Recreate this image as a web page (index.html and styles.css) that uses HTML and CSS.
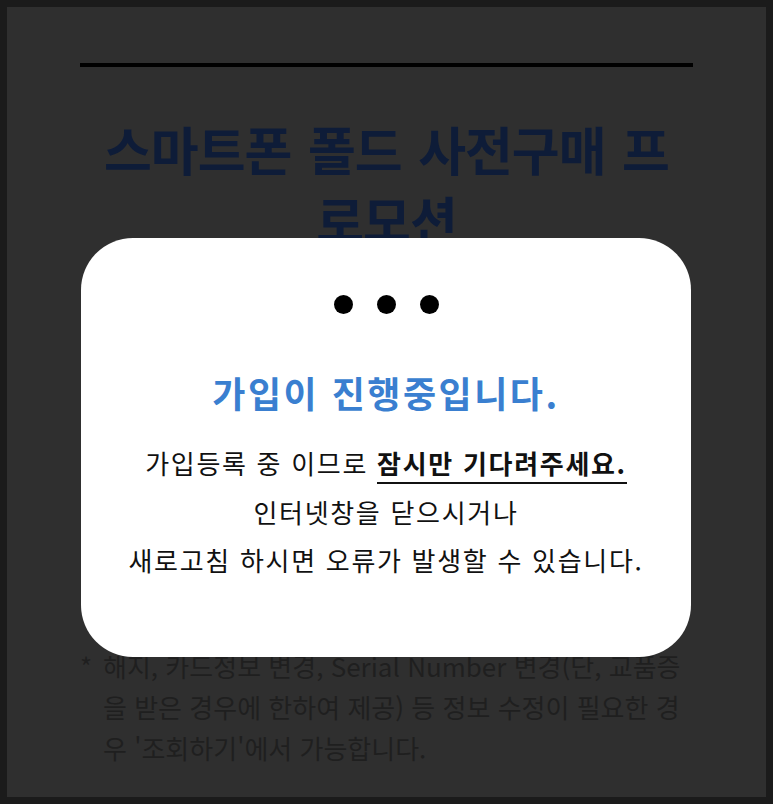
FILE: index.html
```html
<!DOCTYPE html>
<html lang="ko">
<head>
<meta charset="utf-8">
<title>스마트폰 폴드 사전구매 프로모션</title>
<link rel="stylesheet" href="styles.css">
</head>
<body>
<div class="screen">
  <div class="content">
    <div class="rule"></div>
    <h1 class="title">스마트폰 폴드 사전구매 프로모션</h1>
    <p class="note"><span class="star">*</span><span class="note-text">해지, 카드정보 변경, Serial Number 변경(단, 교품증을 받은 경우에 한하여 제공) 등 정보 수정이 필요한 경우 '조회하기'에서 가능합니다.</span></p>
  </div>
  <div class="modal">
    <div class="dots"><span class="dot"></span><span class="dot"></span><span class="dot"></span></div>
    <h2 class="modal-title">가입이 진행중입니다.</h2>
    <p class="modal-text">가입등록 중 이므로 <strong class="em">잠시만 기다려주세요.</strong><br>인터넷창을 닫으시거나<br>새로고침 하시면 오류가 발생할 수 있습니다.</p>
  </div>
</div>
</body>
</html>
```

FILE: styles.css
```css
* { box-sizing: border-box; }
html, body { margin: 0; padding: 0; }
body {
  background: #1b1b1b;
  font-family: "Noto Sans CJK KR", "Noto Sans", sans-serif;
  width: 773px;
  height: 804px;
  overflow: hidden;
}
.screen {
  margin: 7px;
  height: 790px;
  background: #2f2f2f;
  position: relative;
  overflow: hidden;
}
.content {
  padding: 56px 73px 0;
}
.rule {
  height: 4px;
  background: #000;
}
.title {
  margin: 47px 0 0;
  padding: 0 10px;
  font-size: 52px;
  line-height: 70px;
  font-weight: 700;
  letter-spacing: -1px;
  word-spacing: 3px;
  color: #0e1c38;
  text-align: center;
}
.note {
  margin: 391px 0 0;
  display: flex;
  gap: 9px;
  font-size: 26px;
  line-height: 41px;
  color: #1f1f1f;
  letter-spacing: 0;
}
.star { flex: none; width: 14px; }
.modal {
  position: absolute;
  left: 74px;
  top: 231px;
  width: 610px;
  height: 419px;
  background: #fff;
  border-radius: 52px;
  display: flex;
  flex-direction: column;
  align-items: center;
  padding-top: 57px;
  text-align: center;
}
.dots { display: flex; gap: 24px; }
.dot { width: 19px; height: 19px; border-radius: 50%; background: #000; }
.modal-title {
  margin: 57px 0 0;
  font-size: 36px;
  line-height: 43px;
  font-weight: 700;
  letter-spacing: 2.5px;
  color: #3a7fd0;
}
.modal-text {
  margin: 25px 0 0;
  font-size: 26px;
  line-height: 48.5px;
  letter-spacing: 1.7px;
  color: #111;
}
.em {
  font-weight: 700;
  border-bottom: 2px solid #111;
  padding-bottom: 1px;
}
```
